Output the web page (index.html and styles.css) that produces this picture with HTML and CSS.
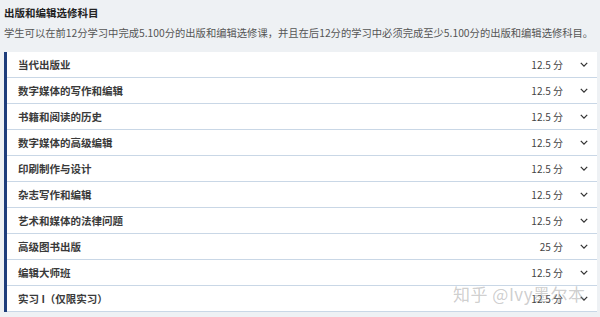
FILE: index.html
```html
<!DOCTYPE html>
<html lang="zh-CN">
<head>
<meta charset="utf-8">
<link rel="stylesheet" href="styles.css">
</head>
<body>
<div class="page">
  <h1 class="title">出版和编辑选修科目</h1>
  <p class="desc">学生可以在前12分学习中完成5.100分的出版和编辑选修课，并且在后12分的学习中必须完成至少5.100分的出版和编辑选修科目。</p>
  <ul class="list">
    <li class="row"><span class="name">当代出版业</span><span class="pts">12.5 分</span><svg class="chev" viewBox="0 0 10 6"><path d="M1 1l4 4 4-4"/></svg></li>
    <li class="row"><span class="name">数字媒体的写作和编辑</span><span class="pts">12.5 分</span><svg class="chev" viewBox="0 0 10 6"><path d="M1 1l4 4 4-4"/></svg></li>
    <li class="row"><span class="name">书籍和阅读的历史</span><span class="pts">12.5 分</span><svg class="chev" viewBox="0 0 10 6"><path d="M1 1l4 4 4-4"/></svg></li>
    <li class="row"><span class="name">数字媒体的高级编辑</span><span class="pts">12.5 分</span><svg class="chev" viewBox="0 0 10 6"><path d="M1 1l4 4 4-4"/></svg></li>
    <li class="row"><span class="name">印刷制作与设计</span><span class="pts">12.5 分</span><svg class="chev" viewBox="0 0 10 6"><path d="M1 1l4 4 4-4"/></svg></li>
    <li class="row"><span class="name">杂志写作和编辑</span><span class="pts">12.5 分</span><svg class="chev" viewBox="0 0 10 6"><path d="M1 1l4 4 4-4"/></svg></li>
    <li class="row"><span class="name">艺术和媒体的法律问题</span><span class="pts">12.5 分</span><svg class="chev" viewBox="0 0 10 6"><path d="M1 1l4 4 4-4"/></svg></li>
    <li class="row"><span class="name">高级图书出版</span><span class="pts">25 分</span><svg class="chev" viewBox="0 0 10 6"><path d="M1 1l4 4 4-4"/></svg></li>
    <li class="row"><span class="name">编辑大师班</span><span class="pts">12.5 分</span><svg class="chev" viewBox="0 0 10 6"><path d="M1 1l4 4 4-4"/></svg></li>
    <li class="row"><span class="name">实习 I（仅限实习）</span><span class="pts">12.5 分</span><svg class="chev" viewBox="0 0 10 6"><path d="M1 1l4 4 4-4"/></svg></li>
  </ul>
  <div class="watermark">知乎 @Ivy墨尔本</div>
</div>
</body>
</html>
```
FILE: styles.css
```css
html, body {
  margin: 0;
  padding: 0;
  background: #eef1f4;
}
.page {
  position: relative;
  padding: 6px 3px 4px 4px;
  font-family: "Noto Sans CJK SC", "Noto Sans", sans-serif;
  color: #333;
}
.title {
  margin: 0;
  font-size: 10.5px;
  line-height: 14px;
  font-weight: 700;
  color: #222;
}
.desc {
  margin: 6px 0 0;
  font-size: 10.3px;
  line-height: 14px;
  color: #555;
  white-space: nowrap;
}
.list {
  list-style: none;
  margin: 12px 0 0;
  padding: 0;
  border-left: 3px solid #1e3d7b;
  background: #fff;
}
.row {
  display: flex;
  align-items: center;
  height: 25px;
  border-bottom: 1px solid #c9d7e6;
  padding: 0 9px 0 11px;
}
.name {
  flex: 1;
  font-size: 10.5px;
  font-weight: 700;
  color: #3a3a3a;
}
.pts {
  font-size: 10px;
  color: #444;
}
.chev {
  width: 8px;
  height: 5px;
  margin-left: 17px;
  fill: none;
  stroke: #333;
  stroke-width: 1.6;
}
.watermark {
  position: absolute;
  left: 453px;
  top: 281px;
  font-size: 17px;
  color: rgba(130, 130, 130, 0.4);
  font-family: "Noto Sans CJK SC", sans-serif;
  letter-spacing: 0.5px;
}
```
